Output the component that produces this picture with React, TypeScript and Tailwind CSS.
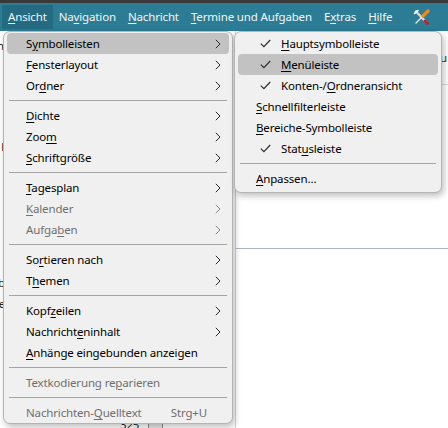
import { Fragment } from "react";

type Item =
  | { sep: true }
  | {
      label: string;
      key: number;
      arrow?: boolean;
      disabled?: boolean;
      shortcut?: string;
      active?: boolean;
      checked?: boolean;
    };

const viewMenu: Item[] = [
  { label: "Symbolleisten", key: 1, arrow: true, active: true },
  { label: "Fensterlayout", key: 0, arrow: true },
  { label: "Ordner", key: 2, arrow: true },
  { sep: true },
  { label: "Dichte", key: 0, arrow: true },
  { label: "Zoom", key: 3, arrow: true },
  { label: "Schriftgröße", key: 0, arrow: true },
  { sep: true },
  { label: "Tagesplan", key: 0, arrow: true },
  { label: "Kalender", key: 0, arrow: true, disabled: true },
  { label: "Aufgaben", key: 5, arrow: true, disabled: true },
  { sep: true },
  { label: "Sortieren nach", key: 2, arrow: true },
  { label: "Themen", key: 1, arrow: true },
  { sep: true },
  { label: "Kopfzeilen", key: 4, arrow: true },
  { label: "Nachrichteninhalt", key: 9, arrow: true },
  { label: "Anhänge eingebunden anzeigen", key: 0 },
  { sep: true },
  { label: "Textkodierung reparieren", key: 16, disabled: true },
  { sep: true },
  { label: "Nachrichten-Quelltext", key: 12, disabled: true, shortcut: "Strg+U" },
];

const toolbarMenu: Item[] = [
  { label: "Hauptsymbolleiste", key: 0, checked: true },
  { label: "Menüleiste", key: 0, checked: true, active: true },
  { label: "Konten-/Ordneransicht", key: 8, checked: true },
  { label: "Schnellfilterleiste", key: 0 },
  { label: "Bereiche-Symbolleiste", key: 0 },
  { label: "Statusleiste", key: 4, checked: true },
  { sep: true },
  { label: "Anpassen…", key: 0 },
];

const menubar = [
  { label: "Ansicht", key: 0, open: true },
  { label: "Navigation", key: 2 },
  { label: "Nachricht", key: 0 },
  { label: "Termine und Aufgaben", key: 0 },
  { label: "Extras", key: 1 },
  { label: "Hilfe", key: 0 },
];

function Mnemonic({ text, at }: { text: string; at: number }) {
  return (
    <>
      {text.slice(0, at)}
      <span className="underline underline-offset-2">{text[at]}</span>
      {text.slice(at + 1)}
    </>
  );
}

function Chevron({ muted }: { muted?: boolean }) {
  return (
    <svg width="6" height="10" viewBox="0 0 6 10" className="ml-auto">
      <path d="M0.8 0.8 L5 5 L0.8 9.2" fill="none" stroke={muted ? "#8a8a8a" : "#2a2a2a"} strokeWidth="1" />
    </svg>
  );
}

function Check() {
  return (
    <svg width="11" height="9" viewBox="0 0 11 9" className="absolute left-[22px] top-[6px]">
      <path d="M0.8 4.6 L3.9 7.6 L10.2 1" fill="none" stroke="#333" strokeWidth="1.3" />
    </svg>
  );
}

function Separator() {
  return (
    <div className="flex h-[9px] items-center px-[5px]">
      <div className="h-px w-full bg-[#a3a3a3]" />
    </div>
  );
}

function MenuRow({ item, indent }: { item: Exclude<Item, { sep: true }>; indent: number }) {
  return (
    <div
      className={
        "relative mx-[3px] flex h-[21px] items-center rounded-[4px] pr-[8px] " +
        (item.active ? "bg-[#c2c2c2] " : "") +
        (item.disabled ? "text-[#6f6f6f]" : "text-black")
      }
      style={{ paddingLeft: item.checked ? indent + 25 : indent }}
    >
      {item.checked && <Check />}
      <span className="whitespace-nowrap">
        <Mnemonic text={item.label} at={item.key} />
      </span>
      {item.arrow && <Chevron muted={item.disabled} />}
      {item.shortcut && <span className="ml-auto mr-[14px]">{item.shortcut}</span>}
    </div>
  );
}

function ToolsIcon() {
  return (
    <svg width="17" height="17" viewBox="0 0 17 17">
      {/* wrench */}
      <path d="M3 2.5 L13.5 13.5" stroke="#d9d9d9" strokeWidth="2.4" strokeLinecap="round" />
      <path d="M1.5 4.5 L3.5 2 M5 1.5 L2.5 3.8" stroke="#f5f5f5" strokeWidth="1.6" strokeLinecap="round" />
      <path d="M12 12 L14.5 14.5" stroke="#b7262c" strokeWidth="3" strokeLinecap="round" />
      {/* screwdriver */}
      <path d="M9.5 7.5 L3 14" stroke="#e6e6e6" strokeWidth="1.4" strokeLinecap="round" />
      <path d="M15 2 L10 7" stroke="#f08a1c" strokeWidth="3.2" strokeLinecap="round" />
    </svg>
  );
}

export default function App() {
  return (
    <div
      className="relative flex h-[428px] w-[448px] flex-col overflow-hidden bg-white text-[11.5px] leading-none tracking-[-0.15px]"
      style={{ fontFamily: '"Segoe UI", "Noto Sans", sans-serif' }}
    >
      <div className="h-[3px] bg-[#3a3a3a]" />

      <div className="flex h-[28px] items-center bg-[#2b7c94] pl-[2px] text-[#f2f6f7]">
        {menubar.map((m) => (
          <div
            key={m.label}
            className={
              "flex h-[24px] items-center whitespace-nowrap px-[6px] " + (m.open ? "bg-[#246b81]" : "")
            }
          >
            <span>
              <Mnemonic text={m.label} at={m.key} />
            </span>
          </div>
        ))}
        <div className="ml-[15px] flex items-center">
          <ToolsIcon />
        </div>
      </div>

      {/* window content under the popups */}
      <div className="flex flex-1">
        <div className="flex w-[236px] flex-col border-r border-[#d4d4d4]">
          <div className="flex w-[3px] flex-col items-end overflow-hidden text-[#222]">
            <span className="mt-[9px] -mr-[1px]">n</span>
            <span className="mt-[89px] -mr-[1px]">l</span>
            <span className="mt-[125px] -mr-[2px]">b</span>
            <span className="mt-[9px] -mr-[2px]">e</span>
          </div>
          <div className="mt-auto flex h-[7px] items-start pl-[120px]">
            <span className="-mt-[2px] text-[#222]">325</span>
            <span className="ml-[9px] h-[7px] w-[15px] border-x border-t border-[#8a8a8a] bg-[#e8e8e8]" />
          </div>
        </div>
        <div className="flex flex-1 flex-col">
          <div className="flex h-[54px] items-center justify-end border-b border-[#d8d8d8] pr-[1px] text-[#333]">
            u
          </div>
          <div className="h-[164px] border-b border-[#a9b6c6]" />
        </div>
      </div>

      {/* Ansicht menu */}
      <div className="absolute left-[3px] top-[31px] w-[230px] rounded-[7px] border border-[#b4b4b4] bg-[#f0f0f0] pt-[1px] shadow-[2px_3px_6px_rgba(0,0,0,0.25)]">
        {viewMenu.map((item, i) => (
          <Fragment key={i}>
            {"sep" in item ? <Separator /> : <MenuRow item={item} indent={19} />}
          </Fragment>
        ))}
      </div>

      {/* Symbolleisten submenu */}
      <div className="absolute left-[234px] top-[31px] w-[208px] rounded-[7px] border border-[#b4b4b4] bg-[#f0f0f0] pb-[3px] pt-[1px] shadow-[2px_3px_6px_rgba(0,0,0,0.25)]">
        {toolbarMenu.map((item, i) => (
          <Fragment key={i}>
            {"sep" in item ? <Separator /> : <MenuRow item={item} indent={18} />}
          </Fragment>
        ))}
      </div>
    </div>
  );
}
